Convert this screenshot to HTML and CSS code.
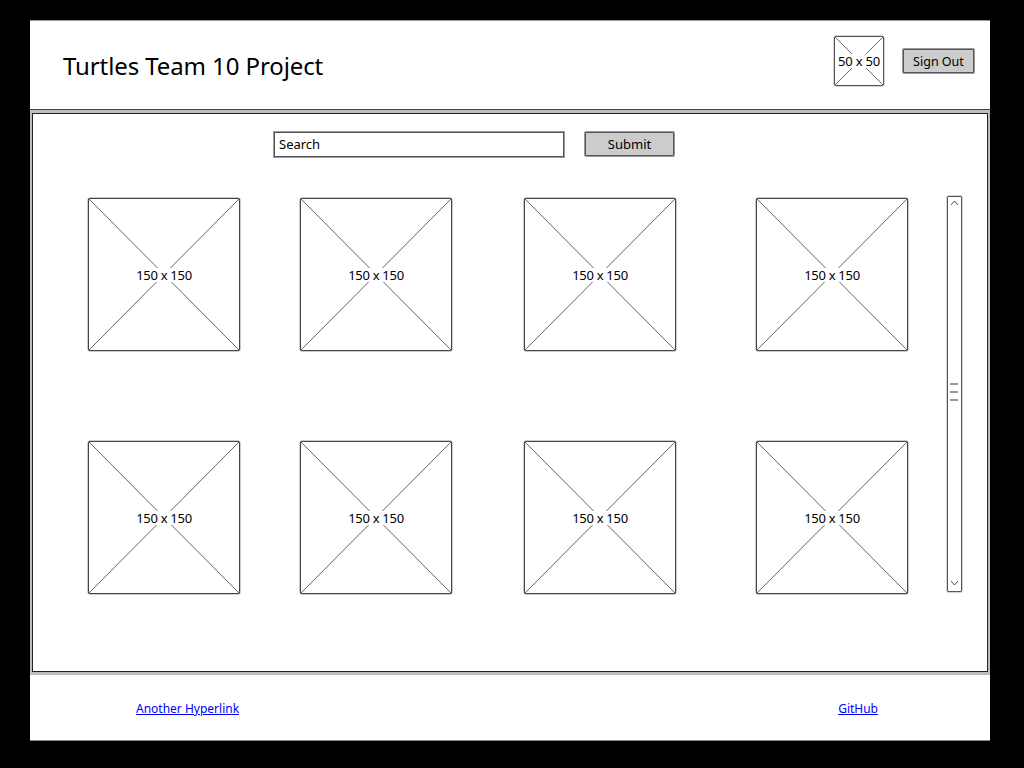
FILE: index.html
```html
<!DOCTYPE html>
<html lang="en">
<head>
<meta charset="utf-8">
<title>Turtles Team 10 Project</title>
<link rel="stylesheet" href="styles.css">
</head>
<body>
<div class="frame">
  <header class="header">
    <h1 class="title">Turtles Team 10 Project</h1>
    <div class="header-right">
      <div class="avatar">
        <svg class="ph-lines" viewBox="0 0 50 50" preserveAspectRatio="none"><line x1="0" y1="0" x2="50" y2="50"/><line x1="50" y1="0" x2="0" y2="50"/></svg>
        <span class="avatar-label">50 x 50</span>
      </div>
      <button class="btn signout">Sign Out</button>
    </div>
  </header>
  <main class="main">
    <div class="canvas">
      <div class="search-row">
        <div class="search-input">Search</div>
        <button class="btn submit">Submit</button>
      </div>
      <div class="content">
        <div class="grid">
          <div class="ph"><svg class="ph-lines" viewBox="0 0 150 150" preserveAspectRatio="none"><line x1="0" y1="0" x2="150" y2="150"/><line x1="150" y1="0" x2="0" y2="150"/></svg><span class="ph-label">150 x 150</span></div>
          <div class="ph"><svg class="ph-lines" viewBox="0 0 150 150" preserveAspectRatio="none"><line x1="0" y1="0" x2="150" y2="150"/><line x1="150" y1="0" x2="0" y2="150"/></svg><span class="ph-label">150 x 150</span></div>
          <div class="ph"><svg class="ph-lines" viewBox="0 0 150 150" preserveAspectRatio="none"><line x1="0" y1="0" x2="150" y2="150"/><line x1="150" y1="0" x2="0" y2="150"/></svg><span class="ph-label">150 x 150</span></div>
          <div class="ph"><svg class="ph-lines" viewBox="0 0 150 150" preserveAspectRatio="none"><line x1="0" y1="0" x2="150" y2="150"/><line x1="150" y1="0" x2="0" y2="150"/></svg><span class="ph-label">150 x 150</span></div>
          <div class="ph"><svg class="ph-lines" viewBox="0 0 150 150" preserveAspectRatio="none"><line x1="0" y1="0" x2="150" y2="150"/><line x1="150" y1="0" x2="0" y2="150"/></svg><span class="ph-label">150 x 150</span></div>
          <div class="ph"><svg class="ph-lines" viewBox="0 0 150 150" preserveAspectRatio="none"><line x1="0" y1="0" x2="150" y2="150"/><line x1="150" y1="0" x2="0" y2="150"/></svg><span class="ph-label">150 x 150</span></div>
          <div class="ph"><svg class="ph-lines" viewBox="0 0 150 150" preserveAspectRatio="none"><line x1="0" y1="0" x2="150" y2="150"/><line x1="150" y1="0" x2="0" y2="150"/></svg><span class="ph-label">150 x 150</span></div>
          <div class="ph"><svg class="ph-lines" viewBox="0 0 150 150" preserveAspectRatio="none"><line x1="0" y1="0" x2="150" y2="150"/><line x1="150" y1="0" x2="0" y2="150"/></svg><span class="ph-label">150 x 150</span></div>
        </div>
        <div class="scrollbar">
          <svg width="15" height="396" viewBox="0 0 15 396">
            <path class="chev" d="M4 9 L7.5 5 L11 9"/>
            <path class="chev" d="M4 385 L7.5 389 L11 385"/>
            <line class="grip" x1="3" y1="188" x2="11" y2="188"/>
            <line class="grip" x1="3" y1="196" x2="11" y2="196"/>
            <line class="grip" x1="3" y1="204" x2="11" y2="204"/>
          </svg>
        </div>
      </div>
    </div>
  </main>
  <footer class="footer">
    <a class="link" href="#">Another Hyperlink</a>
    <a class="link" href="#">GitHub</a>
  </footer>
</div>
</body>
</html>
```

FILE: styles.css
```css
html, body {
  margin: 0;
  padding: 0;
  background: #000;
}
body {
  font-family: "Noto Sans", "Open Sans", sans-serif;
  font-size: 13px;
  color: #000;
}
.frame {
  width: 960px;
  margin: 20px 0 0 30px;
  background: #fff;
}
.header {
  height: 88px;
  border-top: 1px solid #999;
  display: flex;
  align-items: center;
  justify-content: space-between;
  padding: 0 16px 0 33px;
}
.title {
  margin: 0;
  font-size: 24px;
  font-weight: 400;
  letter-spacing: -0.1px;
}
.header-right {
  display: flex;
  align-items: center;
  gap: 19px;
  padding-bottom: 8px;
}
.avatar {
  width: 48px;
  height: 48px;
  border: 1px solid #555;
  box-shadow: 0 0 0 0.5px #aaa;
  border-radius: 2px;
  display: grid;
  place-items: center;
}
.ph-lines {
  grid-area: 1 / 1;
  width: 100%;
  height: 100%;
  display: block;
}
.ph-lines line {
  stroke: #222;
  stroke-width: 0.7;
}
.avatar-label {
  grid-area: 1 / 1;
  background: #fff;
  font-size: 13px;
  line-height: 14px;
  padding: 0 1px;
  white-space: nowrap;
  letter-spacing: -0.2px;
}
.btn {
  font-family: inherit;
  font-size: 13px;
  background: #cccccc;
  border: 1px solid #555;
  box-shadow: 0 0 0 1px #999;
  border-radius: 1px;
  color: #000;
  padding: 0;
  margin: 0;
}
.signout {
  width: 71px;
  height: 24px;
  font-size: 12.5px;
}
.main {
  border-top: 1px solid #444;
  background: #bdbdbd;
  padding: 3px 2px 3px 2px;
}
.canvas {
  background: #fff;
  border: 1px solid #222;
  height: 557px;
}
.search-row {
  display: flex;
  align-items: flex-start;
  gap: 21px;
  padding: 17px 0 0 240px;
}
.search-input {
  width: 284px;
  height: 23px;
  line-height: 23px;
  border: 1px solid #555;
  box-shadow: 0 0 0 1px #999;
  padding: 0 0 0 4px;
  margin: 1px 0 0 1px;
  background: #fff;
}
.submit {
  width: 89px;
  height: 24px;
  margin-top: 1px;
}
.content {
  display: flex;
  align-items: flex-start;
  padding: 39px 0 0 54px;
}
.grid {
  display: grid;
  grid-template-columns: 212px 224px 232px 152px;
  grid-auto-rows: 153px;
  row-gap: 90px;
  margin-top: 2px;
}
.ph {
  width: 150px;
  height: 151px;
  border: 1px solid #444;
  box-shadow: 0 0 0 0.5px #999;
  border-radius: 2px;
  display: grid;
  place-items: center;
  background: #fff;
  margin-left: 1px;
}
.ph-label {
  grid-area: 1 / 1;
  background: #fff;
  font-size: 13px;
  line-height: 14px;
  padding: 0 2px;
  white-space: nowrap;
  letter-spacing: -0.3px;
}
.scrollbar {
  margin-left: 40px;
  width: 15px;
  height: 396px;
  box-sizing: border-box;
  border: 1px solid #555;
  box-shadow: 0 0 0 0.5px #aaa;
  border-radius: 1px;
  display: flex;
  justify-content: center;
  overflow: hidden;
}
.scrollbar svg {
  display: block;
  flex: none;
  margin-top: -1px;
}
.chev {
  fill: none;
  stroke: #222;
  stroke-width: 0.8;
}
.grip {
  stroke: #777;
  stroke-width: 1.5;
}
.footer {
  height: 63px;
  border-bottom: 1px solid #888;
  display: flex;
  align-items: center;
  justify-content: space-between;
  padding: 2px 112px 0 106px;
}
.link {
  color: #0000ff;
  text-decoration: underline;
  font-size: 12px;
}
```
